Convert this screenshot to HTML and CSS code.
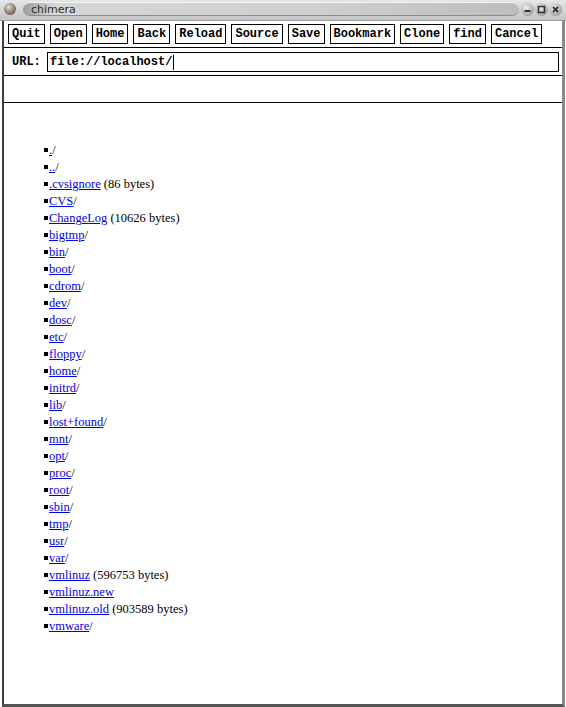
FILE: index.html
```html
<!DOCTYPE html>
<html lang="en">
<head>
    <meta charset="UTF-8">
    <title>chimera</title>
    <link rel="stylesheet" href="styles.css">
</head>
<body>
<div class="window">
    <div class="titlebar">
        <span class="menu-orb"></span>
        <div class="title-pill"><span class="title-text">chimera</span></div>
        <div class="wm-buttons">
            <span class="wm-btn"><svg width="11" height="11" viewBox="0 0 11 11"><rect x="2.5" y="6" width="6" height="2" fill="#333"/></svg></span>
            <span class="wm-btn"><svg width="11" height="11" viewBox="0 0 11 11"><rect x="2.5" y="2.5" width="6" height="6" fill="none" stroke="#333" stroke-width="1.6"/></svg></span>
            <span class="wm-btn"><svg width="11" height="11" viewBox="0 0 11 11"><path d="M3 3 L8 8 M8 3 L3 8" stroke="#333" stroke-width="1.8"/></svg></span>
        </div>
    </div>

    <div class="content">
        <div class="toolbar">
            <button>Quit</button>
            <button>Open</button>
            <button>Home</button>
            <button>Back</button>
            <button>Reload</button>
            <button>Source</button>
            <button>Save</button>
            <button>Bookmark</button>
            <button>Clone</button>
            <button>find</button>
            <button>Cancel</button>
        </div>

        <div class="url-row">
            <label for="url">URL:</label>
            <div class="url-box" id="url">file://localhost/<span class="caret"></span></div>
        </div>

        <div class="status"></div>

        <div class="page">
            <ul class="listing" id="listing">
                <!-- filled in by the script below -->
            </ul>
        </div>
    </div>
</div>

<script>
    // directory entries: name, trailing text after the link
    const entries = [
        ['.', '/'], ['..', '/'], ['.cvsignore', ' (86 bytes)'], ['CVS', '/'],
        ['ChangeLog', ' (10626 bytes)'], ['bigtmp', '/'], ['bin', '/'], ['boot', '/'],
        ['cdrom', '/'], ['dev', '/'], ['dosc', '/'], ['etc', '/'], ['floppy', '/'],
        ['home', '/'], ['initrd', '/'], ['lib', '/'], ['lost+found', '/'], ['mnt', '/'],
        ['opt', '/'], ['proc', '/'], ['root', '/'], ['sbin', '/'], ['tmp', '/'],
        ['usr', '/'], ['var', '/'], ['vmlinuz', ' (596753 bytes)'], ['vmlinuz.new', ''],
        ['vmlinuz.old', ' (903589 bytes)'], ['vmware', '/']
    ];

    const listing = document.getElementById('listing');
    entries.forEach(([name, rest]) => {
        const li = document.createElement('li');
        const dot = document.createElement('span');
        dot.className = 'dot';
        const a = document.createElement('a');
        a.href = '#';
        a.textContent = name;
        li.appendChild(dot);
        li.appendChild(a);
        li.appendChild(document.createTextNode(rest));
        listing.appendChild(li);
    });
</script>
</body>
</html>
```

FILE: styles.css
```css
html, body {
    margin: 0;
    padding: 0;
    background: #fff;
}
.window {
    width: 566px;
    height: 707px;
    box-sizing: border-box;
    display: flex;
    flex-direction: column;
    background: #fff;
}
.titlebar {
    height: 21px;
    display: flex;
    align-items: center;
    padding: 0 4px 2px 4px;
    background: linear-gradient(#e6e6e6, #c4c4c4);
    border-bottom: 1px solid #9a9a9a;
    box-sizing: border-box;
}
.menu-orb {
    width: 12px;
    height: 12px;
    border-radius: 50%;
    background: radial-gradient(circle at 40% 35%, #e8e0d8 0, #9a8a7c 45%, #4a3e36 100%);
    margin-right: 7px;
}
.title-pill {
    flex: 1;
    height: 14px;
    border-radius: 7px;
    background: linear-gradient(90deg, #9c9c9c 0, #d6d6d6 6%, #cfcfcf 60%, #bdbdbd 100%);
    border-top: 1px solid #f4f4f4;
    border-bottom: 1px solid #8c8c8c;
    display: flex;
    align-items: center;
    box-sizing: border-box;
}
.title-text {
    font-family: "DejaVu Sans", sans-serif;
    font-size: 11px;
    color: #2c2c2c;
    margin-left: 8px;
}
.wm-buttons {
    display: flex;
    gap: 1px;
    margin-left: 2px;
}
.wm-btn {
    width: 13px;
    height: 13px;
    border-radius: 50%;
    background: radial-gradient(circle at 40% 35%, #f0f0f0 0, #b0b0b0 60%, #7a7a7a 100%);
    display: flex;
    align-items: center;
    justify-content: center;
}
.content {
    flex: 1;
    display: flex;
    flex-direction: column;
    border-left: 2px solid #3c3c3c;
    border-right: 3px solid #8a8a8a;
    border-bottom: 3px solid #555;
    margin-left: 2px;
    margin-right: 1px;
}
.toolbar {
    display: flex;
    gap: 5px;
    padding: 3px 0 3px 4px;
    border-bottom: 1px solid #000;
}
.toolbar button {
    font-family: "Liberation Mono", monospace;
    font-weight: bold;
    font-size: 12px;
    height: 20px;
    padding: 0 3px;
    background: #fff;
    color: #000;
    border: 1px solid #000;
    border-radius: 0;
}
.url-row {
    display: flex;
    align-items: center;
    padding: 4px 3px 3px 8px;
    border-bottom: 1px solid #000;
}
.url-row label {
    font-family: "Liberation Mono", monospace;
    font-weight: bold;
    font-size: 12px;
    width: 35px;
}
.url-box {
    flex: 1;
    height: 20px;
    box-sizing: border-box;
    border: 1px solid #000;
    padding: 1px 2px;
    font-family: "Liberation Mono", monospace;
    font-weight: bold;
    font-size: 12px;
    line-height: 16px;
    display: flex;
    align-items: center;
}
.caret {
    width: 1px;
    height: 15px;
    background: #000;
    margin-left: 1px;
}
.status {
    height: 26px;
    border-bottom: 1px solid #000;
}
.page {
    flex: 1;
    padding-top: 39px;
}
.listing {
    list-style: none;
    margin: 0;
    padding: 0 0 0 40px;
    font-family: "Liberation Serif", serif;
    font-size: 12.5px;
    line-height: 17px;
    color: #000;
}
.listing a {
    color: #0000ee;
}
.dot {
    display: inline-block;
    width: 4px;
    height: 4px;
    background: #000;
    margin-right: 1px;
    vertical-align: 2px;
}
```
